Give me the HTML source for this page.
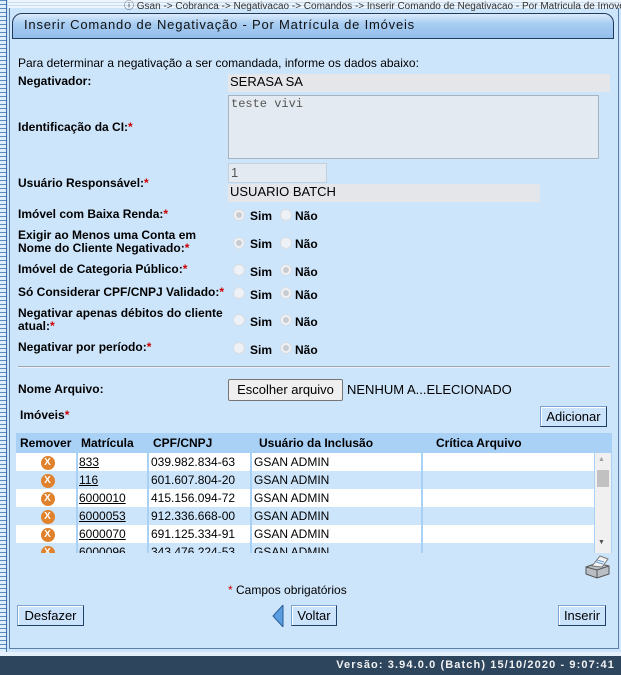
<!DOCTYPE html>
<html><head><meta charset="utf-8"><style>
*{margin:0;padding:0;box-sizing:border-box}
body{width:621px;height:675px;overflow:hidden;background:#cde5fb;font-family:"Liberation Sans",Arial,sans-serif;font-size:12px;color:#000;position:relative}
.a{position:absolute;white-space:nowrap}
.b{font-weight:bold}
.r{color:#c00}
.fld{position:absolute;background:#e4e6ea}
.rad{position:absolute;width:12px;height:12px;border-radius:50%;border:1px solid #d8dde3;background:#eef2f6}
.rad.on::after{content:"";position:absolute;left:2px;top:2px;width:6px;height:6px;border-radius:50%;background:#c8ccd0}
.btn{position:absolute;background:#cbe3fb;border:1px solid #7aa3cf;border-right-color:#1f3f66;border-bottom-color:#1f3f66;font-size:13px;text-align:center;line-height:19px;box-shadow:inset 1px 1px 0 #fff}
table{border-collapse:collapse}
td{height:18px;font-size:12px;padding-left:2px}
.x{display:inline-block;width:14px;height:14px;border-radius:50%;background:#e0812c;color:#fff;font-size:10px;font-weight:bold;line-height:14px;text-align:center}
.sep{position:absolute;top:0;width:2px;height:100px;background:#a9d0f5}
</style></head><body>
<div class="a" style="left:0;top:0;width:7px;height:655px;background:repeating-linear-gradient(#5a8bc0 0 1px,#dfeefc 1px 4px);border-right:1px solid #3b6fa8"></div>
<div class="a" style="left:8px;top:0;width:613px;height:8px;background:repeating-linear-gradient(#eef5fc 0 2px,#c8dcf0 2px 3px)"></div>
<div class="a" style="left:124px;top:-3px;font-size:10px;color:#333">ⓘ Gsan -&gt; Cobranca -&gt; Negativacao -&gt; Comandos -&gt; Inserir Comando de Negativacao - Por Matricula de Imovel</div>
<div class="a" style="left:9px;top:8px;width:610px;height:641px;border:1px solid #5a7fa8;border-top:none"></div>
<div class="a" style="left:12px;top:13px;width:602px;height:26px;border:1px solid #1f3a5c;border-radius:10px 10px 0 0;background:linear-gradient(#dcebfb,#a8cdf2 40%,#93bdea);"></div>
<div class="a" style="left:24px;top:17px;font-size:13px;letter-spacing:0.8px;color:#111">Inserir Comando de Negativação - Por Matrícula de Imóveis</div>

<div class="a" style="left:18px;top:56px">Para determinar a negativação a ser comandada, informe os dados abaixo:</div>
<div class="a b" style="left:18px;top:74px">Negativador:</div>
<div class="fld" style="left:228px;top:74px;width:382px;height:18px"></div>
<div class="a" style="left:230px;top:74px;font-size:13px">SERASA SA</div>
<div class="a" style="left:228px;top:95px;width:371px;height:64px;background:#e4eaf1;border:1px solid #a9b3bd"></div>
<div class="a" style="left:231px;top:97px;font-family:'Liberation Mono',monospace;font-size:12px;color:#555">teste vivi</div>
<div class="a b" style="left:18px;top:120px">Identificação da CI:<span class="r">*</span></div>
<div class="a" style="left:228px;top:163px;width:99px;height:20px;background:#e4eaf1;border:1px solid #c5d0da"></div>
<div class="a" style="left:231px;top:165px;font-size:13px;color:#555">1</div>
<div class="a b" style="left:18px;top:176px">Usuário Responsável:<span class="r">*</span></div>
<div class="fld" style="left:228px;top:184px;width:312px;height:18px"></div>
<div class="a" style="left:230px;top:184px;font-size:13px">USUARIO BATCH</div>

<div class="a b" style="left:18px;top:207px">Imóvel com Baixa Renda:<span class="r">*</span></div>
<div class="a b" style="left:18px;top:229px;line-height:13px">Exigir ao Menos uma Conta em<br>Nome do Cliente Negativado:<span class="r">*</span></div>
<div class="a b" style="left:18px;top:262px">Imóvel de Categoria Público:<span class="r">*</span></div>
<div class="a b" style="left:18px;top:285px">Só Considerar CPF/CNPJ Validado:<span class="r">*</span></div>
<div class="a b" style="left:18px;top:307px;line-height:13px">Negativar apenas débitos do cliente<br>atual:<span class="r">*</span></div>
<div class="a b" style="left:18px;top:340px">Negativar por período:<span class="r">*</span></div>

<div class="rad on" style="left:233px;top:209px"></div><div class="a b" style="left:250px;top:209px">Sim</div><div class="rad" style="left:280px;top:209px"></div><div class="a b" style="left:295px;top:209px">Não</div>
<div class="rad on" style="left:233px;top:237px"></div><div class="a b" style="left:250px;top:237px">Sim</div><div class="rad" style="left:280px;top:237px"></div><div class="a b" style="left:295px;top:237px">Não</div>
<div class="rad" style="left:233px;top:264px"></div><div class="a b" style="left:250px;top:265px">Sim</div><div class="rad on" style="left:280px;top:264px"></div><div class="a b" style="left:295px;top:265px">Não</div>
<div class="rad" style="left:233px;top:287px"></div><div class="a b" style="left:250px;top:288px">Sim</div><div class="rad on" style="left:280px;top:287px"></div><div class="a b" style="left:295px;top:288px">Não</div>
<div class="rad" style="left:233px;top:314px"></div><div class="a b" style="left:250px;top:315px">Sim</div><div class="rad on" style="left:280px;top:314px"></div><div class="a b" style="left:295px;top:315px">Não</div>
<div class="rad" style="left:233px;top:342px"></div><div class="a b" style="left:250px;top:343px">Sim</div><div class="rad on" style="left:280px;top:342px"></div><div class="a b" style="left:295px;top:343px">Não</div>

<div class="a" style="left:18px;top:366px;width:592px;height:2px;border-top:1px solid #9aa;border-bottom:1px solid #eef"></div>
<div class="a b" style="left:18px;top:382px">Nome Arquivo:</div>
<div class="a" style="left:228px;top:379px;width:115px;height:22px;background:#efefef;border:1px solid #767676;border-radius:2px;font-size:13px;text-align:center;line-height:20px">Escolher arquivo</div>
<div class="a" style="left:347px;top:382px;font-size:13px">NENHUM A...ELECIONADO</div>

<div class="a b" style="left:20px;top:408px">Imóveis<span class="r">*</span></div>
<div class="btn" style="left:540px;top:406px;width:67px;height:21px">Adicionar</div>

<div class="a" style="left:16px;top:433px;width:596px;height:120px;background:#a9d0f5"></div>
<div class="a b" style="left:20px;top:436px">Remover</div>
<div class="a b" style="left:81px;top:436px">Matrícula</div>
<div class="a b" style="left:153px;top:436px">CPF/CNPJ</div>
<div class="a b" style="left:259px;top:436px">Usuário da Inclusão</div>
<div class="a b" style="left:436px;top:436px">Crítica Arquivo</div>
<div class="a" style="left:16px;top:453px;width:578px;height:100px;overflow:hidden">
<table style="width:578px">
<colgroup><col style="width:61px"><col style="width:72px"><col style="width:103px"><col style="width:171px"><col></colgroup>
<tr style="background:#fff"><td style="text-align:center"><span class="x">X</span></td><td><u>833</u></td><td>039.982.834-63</td><td>GSAN ADMIN</td><td></td></tr>
<tr style="background:#cde5fb"><td style="text-align:center"><span class="x">X</span></td><td><u>116</u></td><td>601.607.804-20</td><td>GSAN ADMIN</td><td></td></tr>
<tr style="background:#fff"><td style="text-align:center"><span class="x">X</span></td><td><u>6000010</u></td><td>415.156.094-72</td><td>GSAN ADMIN</td><td></td></tr>
<tr style="background:#cde5fb"><td style="text-align:center"><span class="x">X</span></td><td><u>6000053</u></td><td>912.336.668-00</td><td>GSAN ADMIN</td><td></td></tr>
<tr style="background:#fff"><td style="text-align:center"><span class="x">X</span></td><td><u>6000070</u></td><td>691.125.334-91</td><td>GSAN ADMIN</td><td></td></tr>
<tr style="background:#cde5fb"><td style="text-align:center"><span class="x">X</span></td><td><u>6000096</u></td><td>343.476.224-53</td><td>GSAN ADMIN</td><td></td></tr>
</table>
<div class="sep" style="left:60px"></div>
<div class="sep" style="left:131px"></div>
<div class="sep" style="left:234px"></div>
<div class="sep" style="left:405px"></div>
</div>
<div class="a" style="left:595px;top:453px;width:16px;height:100px;background:#f0f0f0"></div>
<div class="a" style="left:598px;top:456px;font-size:7px;color:#a0a0a0">▲</div>
<div class="a" style="left:597px;top:470px;width:12px;height:17px;background:#c1c1c1"></div>
<div class="a" style="left:598px;top:539px;font-size:7px;color:#505050">▼</div>

<svg class="a" style="left:583px;top:553px" width="28" height="26" viewBox="0 0 28 26"><path d="M3 14 L14 10 L26 13 L26 21 L14 25 L3 21 Z" fill="#b8bec4" stroke="#555"/><path d="M3 14 L14 17 L26 13 M14 17 L14 25" stroke="#555" fill="none"/><path d="M9 13 L17 3 L25 6 L19 14 Z" fill="#f4f4f4" stroke="#777"/><path d="M14 7 L21 9 M13 9 L20 11" stroke="#69c"/></svg>

<div class="a" style="left:228px;top:583px"><span class="r">*</span> Campos obrigatórios</div>
<div class="btn" style="left:17px;top:605px;width:67px;height:21px">Desfazer</div>
<svg class="a" style="left:272px;top:605px" width="12" height="22"><path d="M11 0 L1 11 L11 22 Z" fill="#5a9de0" stroke="#2c5d95"/></svg>
<div class="btn" style="left:291px;top:605px;width:46px;height:21px">Voltar</div>
<div class="btn" style="left:558px;top:605px;width:48px;height:21px">Inserir</div>

<div class="a" style="left:0;top:652px;width:621px;height:4px;background:#e6f0fa"></div>
<div class="a" style="left:0;top:656px;width:621px;height:19px;background:#2e455e"></div>
<div class="a b" style="right:6px;top:659px;color:#f2f2f2;font-size:11px;letter-spacing:1.1px">Versão: 3.94.0.0 (Batch) 15/10/2020 - 9:07:41</div>
</body></html>
